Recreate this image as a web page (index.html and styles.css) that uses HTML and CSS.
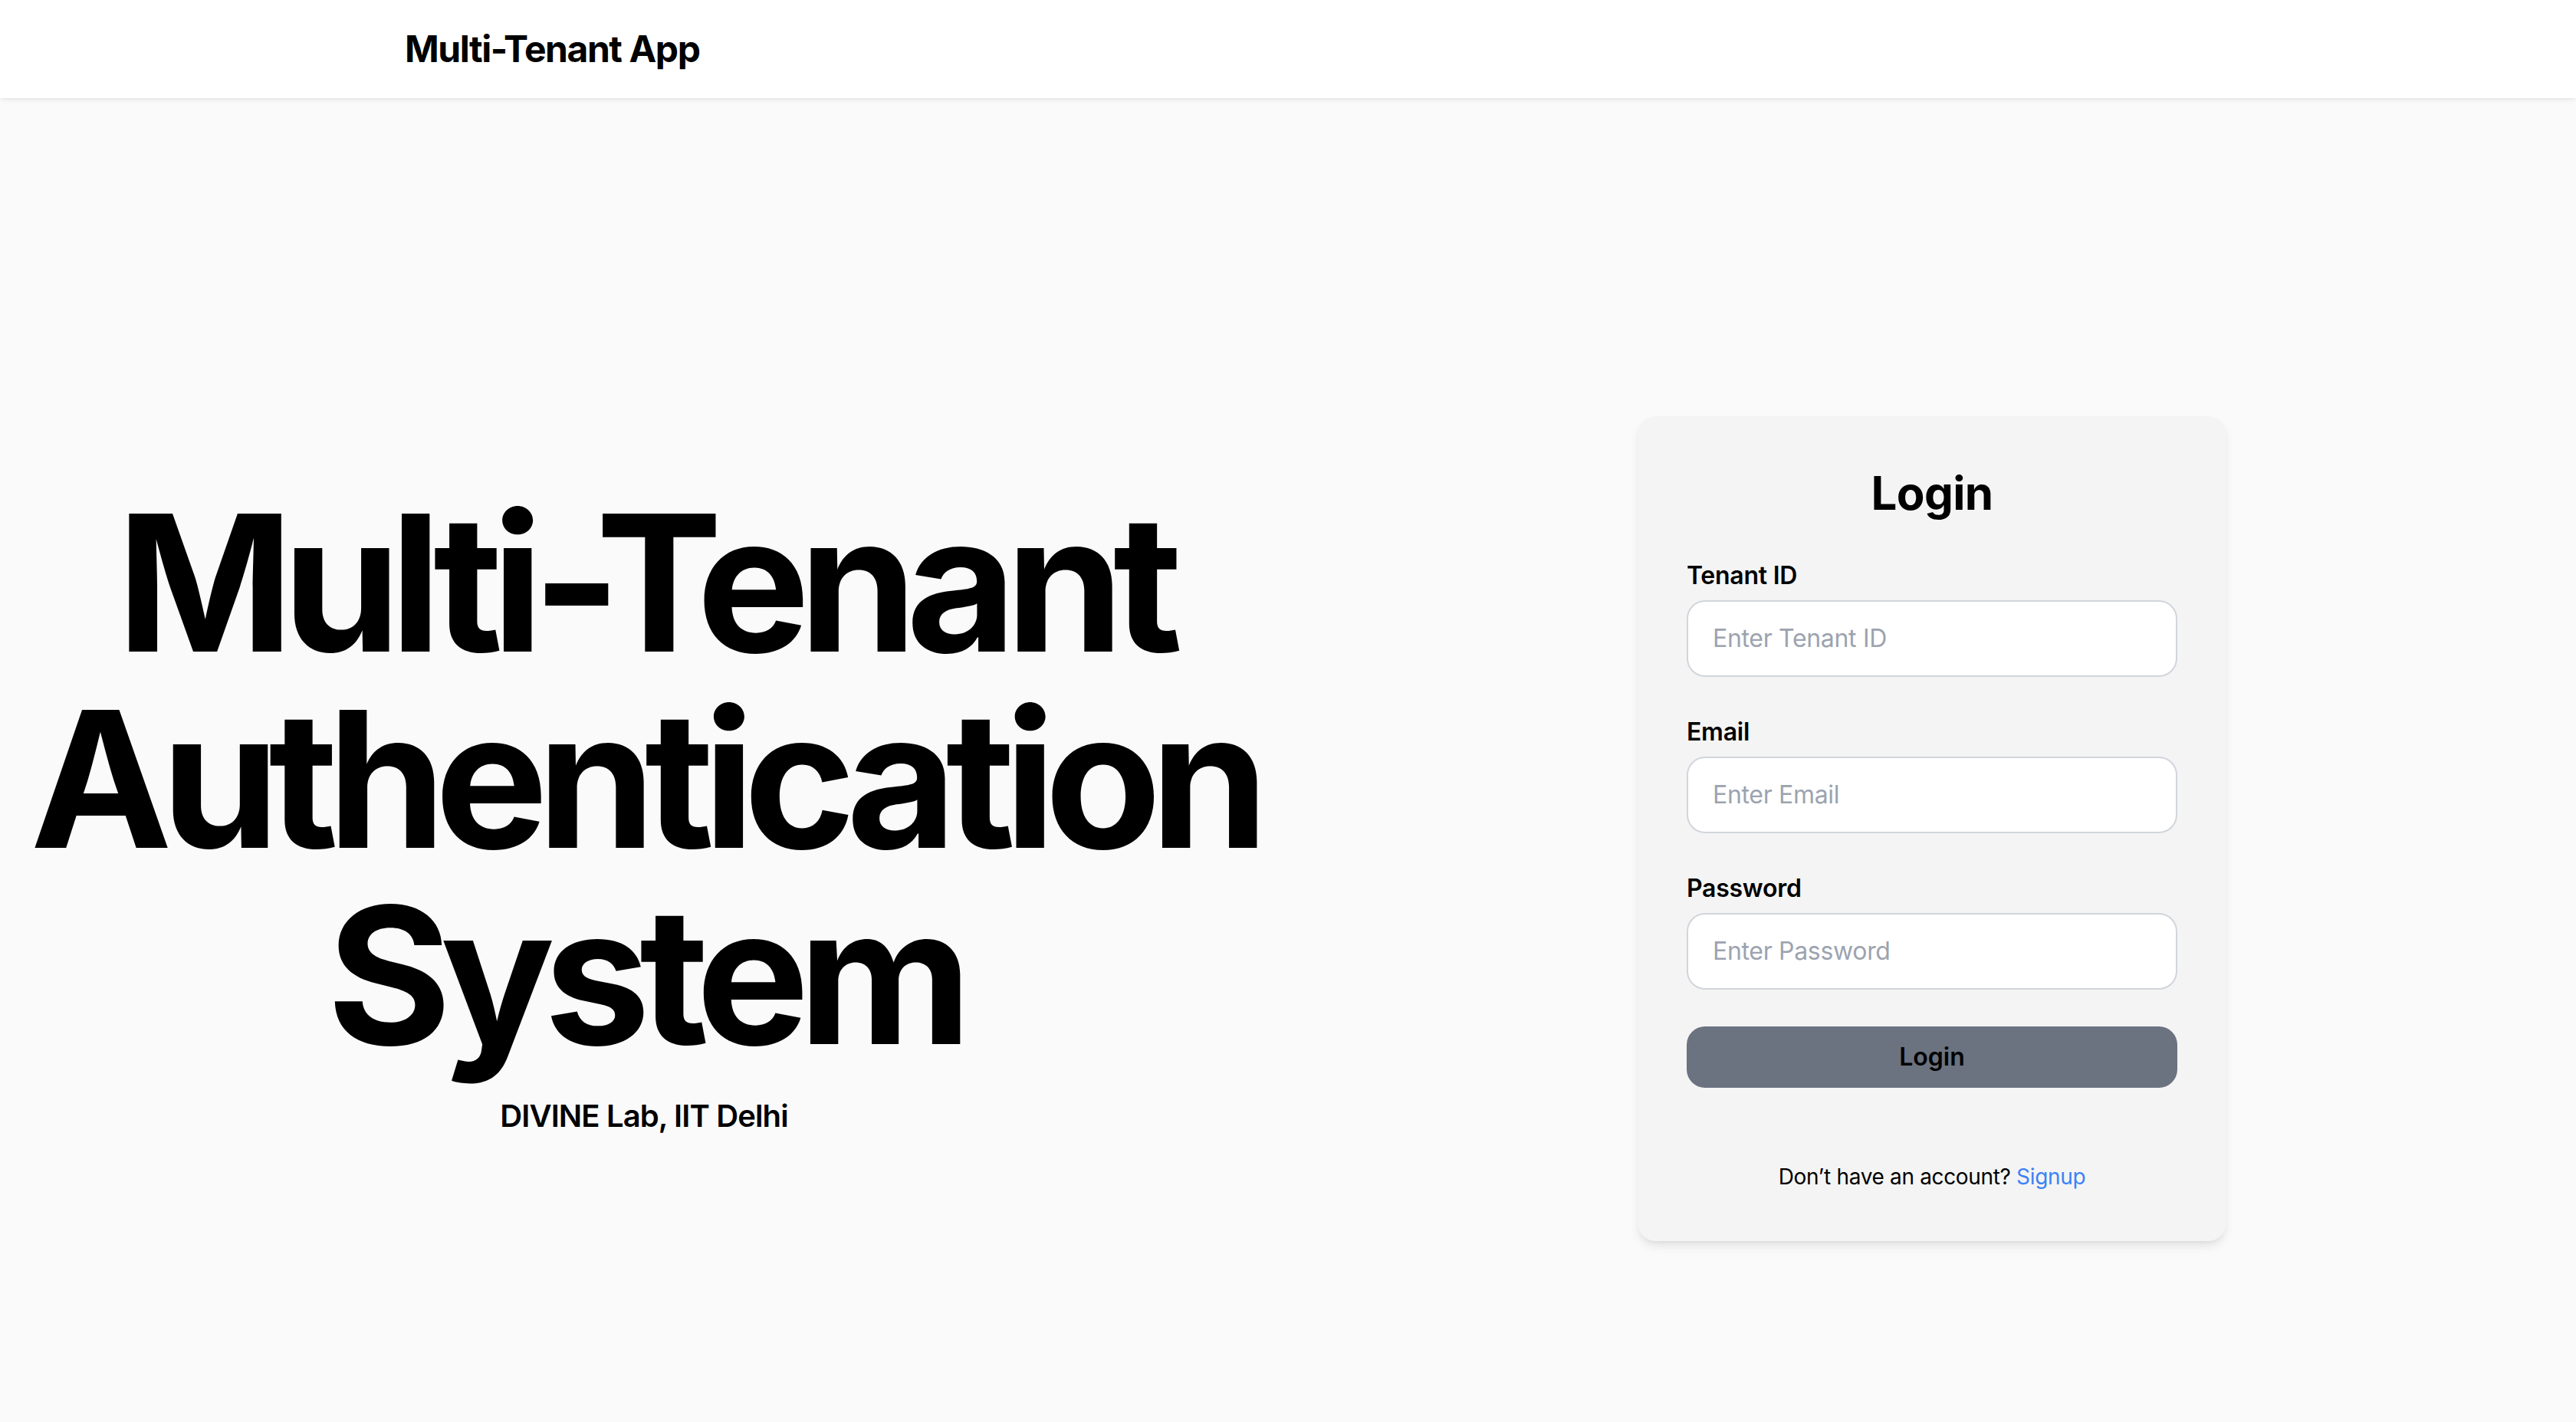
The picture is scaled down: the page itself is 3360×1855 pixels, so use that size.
FILE: index.html
```html
<!DOCTYPE html>
<html lang="en">
<head>
<meta charset="utf-8">
<title>Multi-Tenant App</title>
<link rel="stylesheet" href="styles.css">
</head>
<body>
<header class="topbar">
  <div class="topbar-inner">
    <span class="brand">Multi-Tenant App</span>
  </div>
</header>
<main class="main">
  <section class="hero">
    <h1 class="hero-title">Multi-Tenant<br>Authentication<br>System</h1>
    <p class="hero-sub">DIVINE Lab, IIT Delhi</p>
  </section>
  <section class="auth">
    <div class="card">
      <h2 class="card-title">Login</h2>
      <form class="form">
        <div class="field">
          <label class="label" for="tenant">Tenant ID</label>
          <input class="input" id="tenant" type="text" placeholder="Enter Tenant ID">
        </div>
        <div class="field">
          <label class="label" for="email">Email</label>
          <input class="input" id="email" type="email" placeholder="Enter Email">
        </div>
        <div class="field">
          <label class="label" for="password">Password</label>
          <input class="input" id="password" type="password" placeholder="Enter Password">
        </div>
        <button class="btn" type="button">Login</button>
      </form>
      <p class="footnote">Don’t have an account? <a class="link" href="#">Signup</a></p>
    </div>
  </section>
</main>
</body>
</html>
```
FILE: styles.css
```css
* { box-sizing: border-box; }
html, body { margin: 0; padding: 0; }
body {
  font-family: Inter, "Noto Sans", "Liberation Sans", sans-serif;
  background: #fafafa;
  color: #000;
  overflow: hidden;
  height: 100vh;
}
.topbar {
  position: relative;
  z-index: 2;
  background: #fff;
  height: 128px;
  box-shadow: 0 4px 8px -2px rgba(0,0,0,0.08), 0 2px 4px -2px rgba(0,0,0,0.06);
}
.topbar-inner {
  max-width: 2304px;
  margin: 0 auto;
  height: 100%;
  display: flex;
  align-items: center;
}
.brand {
  font-size: 48px;
  font-weight: 700;
  line-height: 64px;
  letter-spacing: -0.03em;
}
.main {
  display: flex;
  height: calc(100vh - 128px);
  padding-top: 132px;
}
.hero, .auth {
  width: 50%;
  display: flex;
  flex-direction: column;
  align-items: center;
  justify-content: center;
}
.auth { padding-top: 46px; }
.hero-title {
  margin: 0;
  font-size: 248px;
  line-height: 256px;
  font-weight: 700;
  letter-spacing: -0.058em;
  text-align: center;
}
.hero-sub {
  margin: 28px 0 0;
  font-size: 40px;
  line-height: 56px;
  font-weight: 600;
  letter-spacing: -0.022em;
  text-align: center;
}
.card {
  width: 768px;
  padding: 64px;
  background: #f4f4f4;
  border-radius: 24px;
  box-shadow: 0 8px 14px -2px rgba(0,0,0,0.09), 0 4px 8px -4px rgba(0,0,0,0.08);
}
.card-title {
  margin: 0 0 48px;
  font-size: 60px;
  line-height: 72px;
  font-weight: 700;
  letter-spacing: -0.01em;
  text-align: center;
}
.form { display: flex; flex-direction: column; }
.field { display: flex; flex-direction: column; margin-bottom: 48px; }
.label {
  font-size: 32px;
  line-height: 48px;
  font-weight: 600;
  letter-spacing: -0.008em;
  margin-bottom: 8px;
}
.input {
  height: 100px;
  border: 2px solid #d1d5db;
  border-radius: 24px;
  background: #fff;
  padding: 0 32px;
  font-family: inherit;
  font-size: 32px;
  letter-spacing: -0.01em;
  color: #111;
  outline: none;
}
.input::placeholder { color: #9ca3af; }
.btn {
  height: 80px;
  border: 0;
  border-radius: 24px;
  background: #6b7280;
  color: #000;
  font-family: inherit;
  font-size: 32px;
  font-weight: 600;
  line-height: 48px;
}
.footnote {
  margin: 96px 0 0;
  font-size: 28px;
  line-height: 40px;
  letter-spacing: -0.012em;
  text-align: center;
}
.link { color: #3b82f6; text-decoration: none; }
```
